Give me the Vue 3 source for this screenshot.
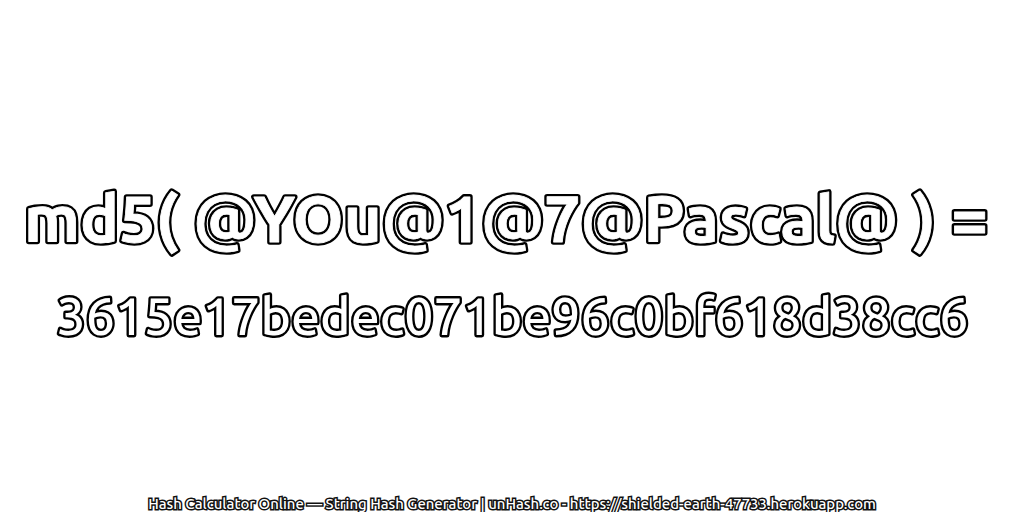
<script setup>
const first = 'md5( @YOu@1@7@Pascal@ ) ='
const second = '3615e17bedec071be96c0bf618d38cc6'
</script>

<template>
  <div class="page">
    <main class="center">
      <svg class="line first" width="1024" height="64" viewBox="0 0 1024 64">
        <text class="outline" x="506" y="56">{{ first }}</text>
        <text class="inner" x="506" y="56" aria-hidden="true">{{ first }}</text>
      </svg>
      <svg class="line second" width="1024" height="64" viewBox="0 0 1024 64">
        <text class="outline" x="512.5" y="51">{{ second }}</text>
        <text class="inner" x="512.5" y="51" aria-hidden="true">{{ second }}</text>
      </svg>
    </main>
    <footer class="foot">Hash Calculator Online — String Hash Generator | unHash.co - https://shielded-earth-47733.herokuapp.com</footer>
  </div>
</template>

<style>
html, body { margin: 0; background: #fff; }
</style>
<style scoped>
.page { width: 1024px; height: 512px; display: flex; flex-direction: column; align-items: center; background: #fff; font-family: Ubuntu, "Open Sans", "Noto Sans", sans-serif; overflow: hidden; }
.center { flex: 1; display: flex; flex-direction: column; justify-content: center; align-items: center; gap: 34px; padding-top: 38px; }
.line { display: block; overflow: visible; }
.line text { text-anchor: middle; stroke-linejoin: round; white-space: pre; }
.first text { font-size: 65px; font-weight: 700; }
.second text { font-size: 51.7px; font-weight: 500; }
.outline { fill: #000; stroke: #000; stroke-width: 5.6px; }
.inner { fill: #fff; stroke: #fff; stroke-width: 0.8px; }
.second .outline { stroke-width: 4.8px; }
.second .inner { fill: #fff; stroke: none; }
.foot { font-size: 14.9px; line-height: 16px; font-weight: 500; color: #fff; -webkit-text-stroke: 3px #111; paint-order: stroke fill; white-space: nowrap; }
</style>
